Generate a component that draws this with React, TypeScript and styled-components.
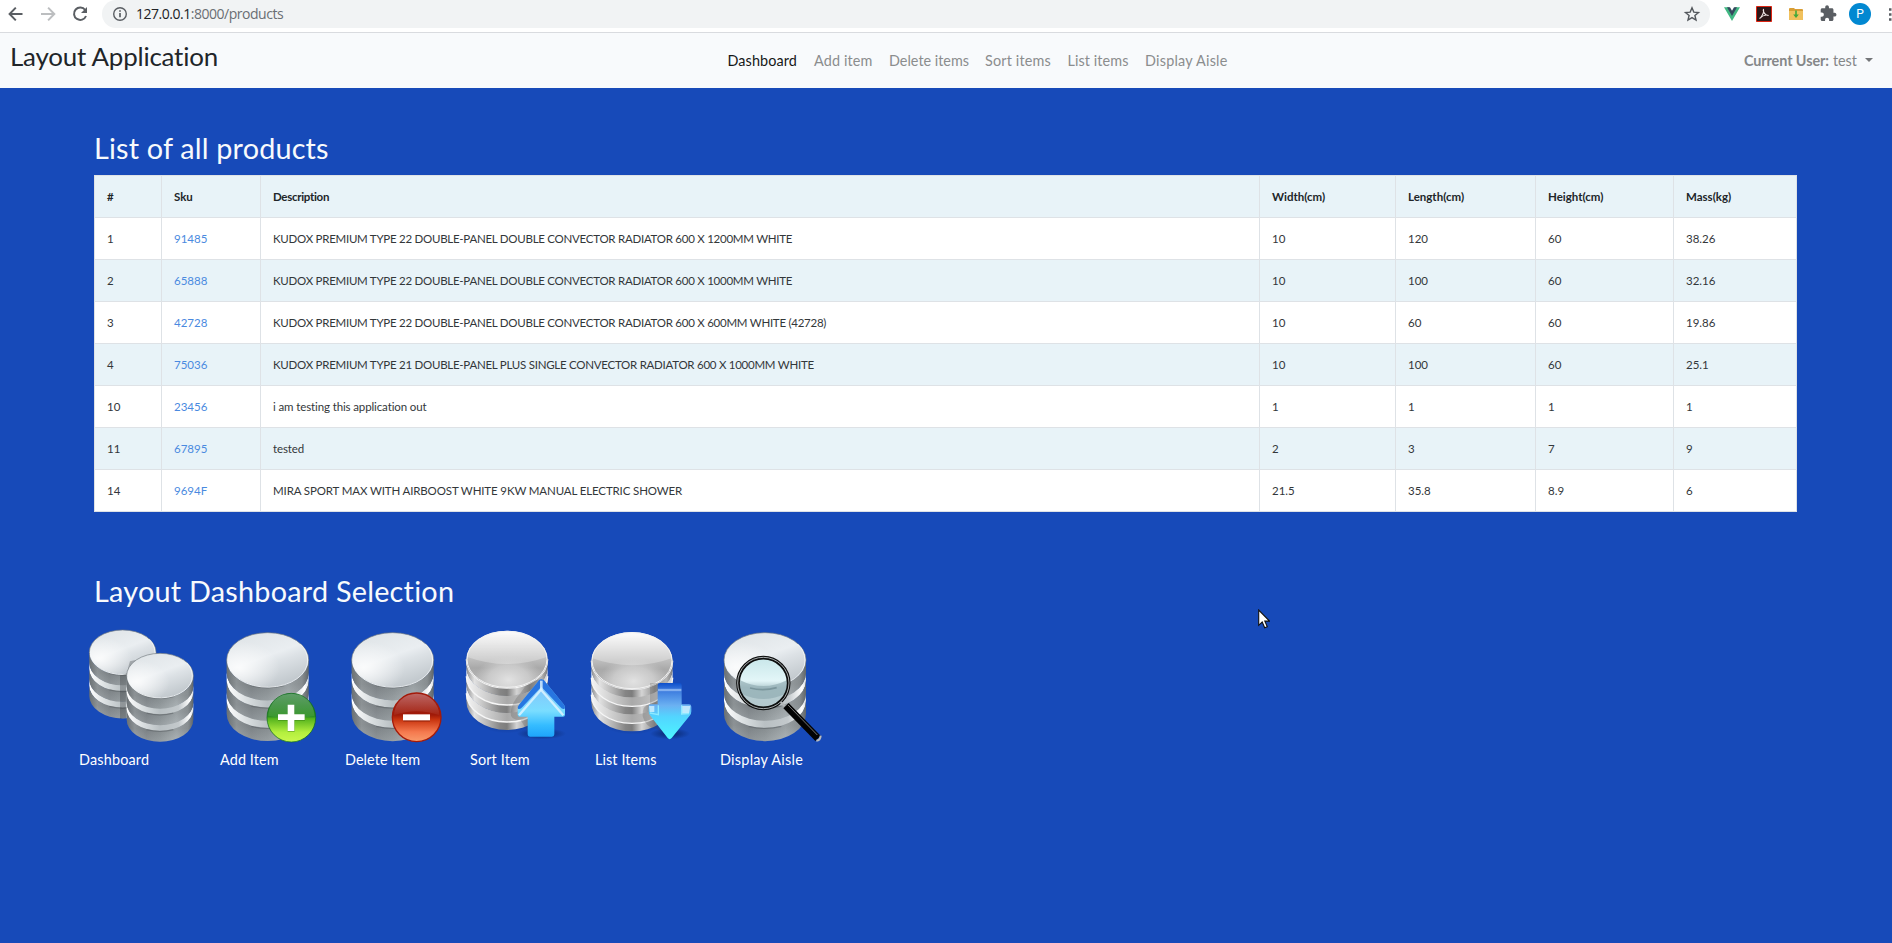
import React from "react";
import styled, { createGlobalStyle } from "styled-components";

const GlobalStyle = createGlobalStyle`
  * { box-sizing: border-box; }
  body {
    margin: 0;
    background: #174ab9;
    font-family: Lato, "Open Sans", sans-serif;
    font-size: 14.4px;
    font-weight: 400;
    line-height: 1.6;
    color: #212529;
    overflow: hidden;
    font-variant-ligatures: none;
  }
`;

const Page = styled.div`
  display: flex;
  flex-direction: column;
  height: 943px;
  overflow: hidden;
`;

/* ---------- browser toolbar ---------- */

const BrowserBar = styled.div`
  display: flex;
  align-items: flex-start;
  height: 33px;
  background: #fff;
  border-bottom: 1px solid #d9dbdf;
`;

const BrowserButtons = styled.div`
  display: flex;
  gap: 8px;
  width: 102px;
  padding: 2px 0 0 4px;
  flex: none;
`;

const ToolIcon = styled.svg`
  display: block;
  width: 24px;
  height: 24px;
  flex: none;
`;

const AddressBar = styled.div`
  display: flex;
  align-items: center;
  flex: 1;
  height: 28px;
  padding: 0 6px;
  border-radius: 14px;
  background: #f1f3f4;
`;

const Url = styled.div`
  flex: 1;
  padding-left: 4px;
  font-family: "Open Sans", "Noto Sans", sans-serif;
  font-size: 14px;
  letter-spacing: -0.48px;
  line-height: 26px;
  white-space: nowrap;
  color: #6a6e73;
`;

const UrlHost = styled.span`
  color: #202124;
`;

const Extensions = styled.div`
  display: flex;
  align-items: center;
  gap: 8px;
  width: 182px;
  height: 28px;
  padding-left: 10px;
  overflow: hidden;
  flex: none;
`;

const Avatar = styled.div`
  display: flex;
  align-items: center;
  justify-content: center;
  width: 22px;
  height: 22px;
  margin: 0 4px 0 1px;
  border-radius: 50%;
  background: #0288d1;
  color: #fff;
  font: 400 12px Roboto, sans-serif;
  flex: none;
`;

/* ---------- application navbar ---------- */

const Navbar = styled.nav`
  display: grid;
  grid-template-columns: 719.5px 1fr auto;
  height: 55px;
  padding: 0 19px 0 0;
  background: #f8fafc;
`;

const Brand = styled.div`
  padding-left: 10px;
  font-size: 25.9px;
  letter-spacing: -0.2px;
  line-height: 47px;
`;

const NavList = styled.div`
  display: flex;
`;

const NavItem = styled.a<{ $active?: boolean; $width: number; $track?: number }>`
  width: ${(p) => p.$width}px;
  padding-left: 8px;
  letter-spacing: ${(p) => p.$track ?? 0}px;
  line-height: 55px;
  white-space: nowrap;
  color: ${(p) => (p.$active ? "#161718" : "#8b8d8e")};
`;

const UserMenu = styled.div`
  display: flex;
  align-items: center;
  color: #858789;
`;

const UserLabel = styled.span`
  width: 89px;
  font-weight: 700;
  letter-spacing: -0.08px;
`;

const Caret = styled.span`
  margin: -2px 0 0 8px;
  border: 4.5px solid transparent;
  border-top-color: #747679;
  border-bottom: 0;
`;

/* ---------- content ---------- */

const Content = styled.main`
  flex: 1;
  padding: 43px 95px 0 94px;
`;

const Heading = styled.h2<{ $top?: number; $track: number }>`
  margin: ${(p) => p.$top ?? 0}px 0 9px;
  font-size: 28.8px;
  font-weight: 400;
  line-height: 35px;
  letter-spacing: ${(p) => p.$track}px;
  color: #f8fafc;
`;

const ProductTable = styled.table`
  width: 1703px;
  table-layout: fixed;
  border-collapse: collapse;
  background: #fff;
  font-size: 11.5px;
`;

const Row = styled.tr<{ $tinted?: boolean }>`
  height: 42px;
  background: ${(p) => (p.$tinted ? "#e8f3f8" : "#ffffff")};
`;

const HeadCell = styled.th<{ $track: number }>`
  padding: 1px 12px 0;
  border: 1px solid #dee2e6;
  font-weight: 700;
  letter-spacing: ${(p) => p.$track}px;
  text-align: left;
`;

const Cell = styled.td<{ $track?: number }>`
  padding: 1px 12px 0;
  border: 1px solid #dee2e6;
  letter-spacing: ${(p) => p.$track ?? 0}px;
  white-space: nowrap;
  color: #33373a;
`;

const SkuLink = styled.a`
  color: #4a8ae0;
`;

const Tiles = styled.div`
  display: flex;
  height: 160px;
  margin: 3px 0 0 -15px;
`;

const Tile = styled.a<{ $width: number }>`
  width: ${(p) => p.$width}px;
  flex: none;
`;

const TileArt = styled.svg`
  display: block;
  width: 125px;
  height: 128px;
  overflow: visible;
`;

const TileLabel = styled.div<{ $track: number }>`
  padding-top: 2px;
  line-height: 24px;
  letter-spacing: ${(p) => p.$track}px;
  white-space: nowrap;
  color: #fff;
`;

const Pointer = styled.svg`
  position: absolute;
  left: 1258px;
  top: 609px;
  width: 12px;
  height: 20px;
`;

const SharedDefs = styled.svg`
  position: absolute;
`;

/* ---------- drawings ---------- */

const Defs = () => (
  <SharedDefs width="0" height="0">
    <defs>
      <linearGradient id="side" x1="0" x2="1">
        <stop offset="0" stopColor="#73797c" />
        <stop offset=".12" stopColor="#9ba1a4" />
        <stop offset=".3" stopColor="#858b8f" />
        <stop offset=".5" stopColor="#8f9699" />
        <stop offset=".75" stopColor="#a9b0b3" />
        <stop offset=".92" stopColor="#969c9f" />
        <stop offset="1" stopColor="#676d70" />
      </linearGradient>
      <linearGradient id="sideShade" x1="0" x2="0" y1="0" y2="1">
        <stop offset=".6" stopColor="#3d4245" stopOpacity=".35" />
        <stop offset="1" stopColor="#c5cccf" stopOpacity=".35" />
      </linearGradient>
      <linearGradient id="lip" x1="0" x2="1">
        <stop offset="0" stopColor="#ffffff" />
        <stop offset=".25" stopColor="#d9dee0" />
        <stop offset=".5" stopColor="#b9c0c3" />
        <stop offset=".78" stopColor="#c3c9cc" />
        <stop offset=".95" stopColor="#ffffff" />
        <stop offset="1" stopColor="#d8dcde" />
      </linearGradient>
      <linearGradient id="lid" x1=".2" y1="0" x2=".75" y2="1">
        <stop offset="0" stopColor="#dfe4e7" />
        <stop offset=".45" stopColor="#eaeef1" />
        <stop offset=".58" stopColor="#dde2e6" />
        <stop offset="1" stopColor="#bcc3c8" />
      </linearGradient>
      <radialGradient id="lidGlow" cx=".15" cy=".65" r=".5">
        <stop offset="0" stopColor="#fff" stopOpacity=".8" />
        <stop offset="1" stopColor="#fff" stopOpacity="0" />
      </radialGradient>
      <linearGradient id="chromeSide" x1="0" x2="1">
        <stop offset="0" stopColor="#8f8f8f" />
        <stop offset=".1" stopColor="#e2e2e2" />
        <stop offset=".28" stopColor="#b0b0b0" />
        <stop offset=".42" stopColor="#858585" />
        <stop offset=".5" stopColor="#7d7d7d" />
        <stop offset=".62" stopColor="#d4d4d4" />
        <stop offset=".78" stopColor="#8f8f8f" />
        <stop offset=".92" stopColor="#b5b5b5" />
        <stop offset="1" stopColor="#7d7d7d" />
      </linearGradient>
      <linearGradient id="chromeLip" x1="0" x2="1">
        <stop offset="0" stopColor="#f4f4f4" />
        <stop offset=".25" stopColor="#cfcfcf" />
        <stop offset=".5" stopColor="#a9a9a9" />
        <stop offset="1" stopColor="#d8d8d8" />
      </linearGradient>
      <linearGradient id="chromeLid" x1="0" x2="0" y1="0" y2="1">
        <stop offset="0" stopColor="#fdfdfd" />
        <stop offset=".45" stopColor="#c4c4c4" />
        <stop offset=".65" stopColor="#a9a9a9" />
        <stop offset="1" stopColor="#bdbdbd" />
      </linearGradient>
      <radialGradient id="chromeGlow" cx=".52" cy=".86" r=".42">
        <stop offset="0" stopColor="#e2e2e2" />
        <stop offset=".6" stopColor="#d0d0d0" stopOpacity=".8" />
        <stop offset="1" stopColor="#c8c8c8" stopOpacity="0" />
      </radialGradient>
      <linearGradient id="green" x1="0" x2="0" y1="0" y2="1">
        <stop offset="0" stopColor="#0d6b1c" />
        <stop offset=".48" stopColor="#2f9222" />
        <stop offset=".52" stopColor="#55b31e" />
        <stop offset=".8" stopColor="#b3ef3e" />
        <stop offset="1" stopColor="#c9f84d" />
      </linearGradient>
      <linearGradient id="red" x1="0" x2="0" y1="0" y2="1">
        <stop offset="0" stopColor="#9a1814" />
        <stop offset=".45" stopColor="#a01a08" />
        <stop offset=".55" stopColor="#c93510" />
        <stop offset=".8" stopColor="#f5794e" />
        <stop offset="1" stopColor="#f99b6c" />
      </linearGradient>
      <linearGradient id="gloss" x1="0" x2="0" y1="0" y2="1">
        <stop offset="0" stopColor="#fff" stopOpacity=".34" />
        <stop offset="1" stopColor="#fff" stopOpacity=".04" />
      </linearGradient>
      <linearGradient id="up" x1="0" x2="0" y1="0" y2="1">
        <stop offset="0" stopColor="#86bdf8" />
        <stop offset=".55" stopColor="#7addff" />
        <stop offset=".8" stopColor="#35bcff" />
        <stop offset="1" stopColor="#1ea4fb" />
      </linearGradient>
      <linearGradient id="down" x1="0" x2="0" y1="0" y2="1">
        <stop offset="0" stopColor="#0d4fcb" />
        <stop offset=".12" stopColor="#3a78dd" />
        <stop offset=".4" stopColor="#6bb1f2" />
        <stop offset=".6" stopColor="#52d5ff" />
        <stop offset="1" stopColor="#4cf6ff" />
      </linearGradient>
      <linearGradient id="lens" x1="0" x2="0" y1="0" y2="1">
        <stop offset="0" stopColor="#c9e7ea" />
        <stop offset=".45" stopColor="#e3f6f8" />
        <stop offset=".58" stopColor="#b7cfd4" />
        <stop offset="1" stopColor="#b4c8cc" />
      </linearGradient>
      <radialGradient id="shadow">
        <stop offset="0" stopColor="#03194e" stopOpacity=".75" />
        <stop offset="1" stopColor="#03194e" stopOpacity="0" />
      </radialGradient>
    </defs>
  </SharedDefs>
);

const band = (cx: number, y: number, rx: number, ry: number, h: number) =>
  `M${cx - rx} ${y}v${h}a${rx} ${ry} 0 0 0 ${2 * rx} 0v${-h}a${rx} ${ry} 0 0 1 ${-2 * rx} 0z`;

const SilverDisks = ({ cx, cy, rx = 123, ry = 82 }: { cx: number; cy: number; rx?: number; ry?: number }) => {
  const step = rx * 0.496;
  const h = rx * 0.32;
  return (
    <g>
      {[2, 1, 0].map((i) => {
        const y = cy + i * step;
        return (
          <g key={i}>
            {i > 0 && (
              <path d={band(cx, y - step + h - 2, rx, ry, step - h + 4)} fill="url(#lip)" />
            )}
            <path d={band(cx, y, rx, ry, h)} fill="url(#side)" />
            <path d={band(cx, y, rx, ry, h)} fill="url(#sideShade)" opacity=".45" />
            <path
              d={`M${cx - rx * 0.4} ${y + ry * 0.94}Q${cx} ${y + ry * 1.09} ${cx + rx * 0.4} ${y + ry * 0.94}`}
              fill="none"
              stroke="#5b6164"
              strokeWidth="4"
              opacity=".55"
            />
          </g>
        );
      })}
      <ellipse cx={cx} cy={cy} rx={rx} ry={ry} fill="url(#lid)" stroke="#747c80" strokeWidth="2" />
      <ellipse cx={cx} cy={cy} rx={rx - 2} ry={ry - 2} fill="url(#lidGlow)" />
      <path
        d={`M${cx - rx + 3} ${cy + 5}A${rx - 3} ${ry - 3} 0 0 0 ${cx + rx - 3} ${cy}Q${cx + rx - 4} ${cy - ry * 0.35} ${cx + rx * 0.8} ${cy - ry * 0.58}`}
        fill="none"
        stroke="#f7f9fa"
        strokeWidth="3"
        opacity=".85"
      />
    </g>
  );
};

const ChromeDisks = ({ cx, cy }: { cx: number; cy: number }) => {
  const rx = 122;
  const ry = 86;
  const step = 51;
  const h = 24;
  return (
    <g>
      <ellipse cx={cx} cy={cy + 160} rx="110" ry="62" fill="url(#shadow)" />
      {[2, 1, 0].map((i) => {
        const y = cy + i * step;
        return (
          <g key={i}>
            {i > 0 && <path d={band(cx, y - step + h - 2, rx, ry, step - h + 3)} fill="url(#chromeLip)" />}
            <path d={band(cx, y, rx, ry, h)} fill="url(#chromeSide)" />
            <path d={`M${cx - rx} ${y}a${rx} ${ry} 0 0 0 ${2 * rx} 0`} fill="none" stroke="#f6f6f6" strokeWidth="4" />
          </g>
        );
      })}
      <ellipse cx={cx} cy={cy} rx={rx} ry={ry} fill="url(#chromeLid)" />
      <ellipse cx={cx} cy={cy} rx={rx} ry={ry} fill="url(#chromeGlow)" />
      <path
        d={`M${cx - rx + 1} ${cy - 8}Q${cx} ${cy + 36} ${cx + rx - 1} ${cy - 8}A${rx} ${ry} 0 0 0 ${cx - rx + 1} ${cy - 8}z`}
        fill="#fff"
        opacity=".28"
      />
      <ellipse cx={cx} cy={cy} rx={rx - 2} ry={ry - 2} fill="none" stroke="#f2f2f2" strokeWidth="3" />
    </g>
  );
};

const DashboardArt = () => (
  <TileArt viewBox="27 0 375 384">
    <SilverDisks cx={158} cy={103} rx={100} ry={67} />
    <path d="M150 172Q190 165 200 125L180 130Q165 170 168 300L150 303z" fill="#25292b" opacity=".28" />
    <SilverDisks cx={270} cy={173} rx={100} ry={67} />
  </TileArt>
);

const AddArt = () => (
  <TileArt viewBox="450 0 375 384">
    <SilverDisks cx={593} cy={126} />
    <circle cx="664" cy="299" r="73" fill="url(#green)" stroke="#11701d" strokeOpacity=".75" strokeWidth="3" />
    <path d="M595 293a69 66 0 0 1 138 0q-69 18-138 0z" fill="url(#gloss)" />
    <path d="M653 262h21v27h31v19h-31v33h-21v-33h-29v-19h29z" fill="#2d7012" opacity=".5" />
    <path d="M653 260h20v29h31v17h-31v33h-20v-33h-29v-17h29z" fill="#fff" />
  </TileArt>
);

const DeleteArt = () => (
  <TileArt viewBox="45 0 375 384">
    <SilverDisks cx={188} cy={126} />
    <circle cx="260" cy="298" r="73" fill="url(#red)" stroke="#a41a09" strokeWidth="4" />
    <path d="M192 292a68 65 0 0 1 136 0q-68-24-136 0z" fill="url(#gloss)" />
    <path d="M220 291h80v20h-80z" fill="#7a1605" opacity=".55" />
    <path d="M219 289h81v18h-81z" fill="#fff" />
  </TileArt>
);

const SortArt = () => (
  <TileArt viewBox="420 0 375 384">
    <ChromeDisks cx={531} cy={124} />
    <path d="M634 184q-42 4-62 40-28 30-30 60-2 22 30 22l20 34h46z" fill="#444" opacity=".22" />
    <ellipse cx="634" cy="347" rx="74" ry="17" fill="url(#shadow)" />
    <path
      d="M634 184q8 0 14 10l54 66q4 6 3 14v16q0 6-6 6h-26v53q0 7-7 7h-66q-7 0-7-7v-53h-24q-6 0-6-6v-16q0-8 4-14l54-66q6-10 13-10z"
      fill="url(#up)"
    />
    <path d="M634 184q8 0 14 10l54 66q4 6 2 12-6 4-14-6l-56-60-56 60q-8 10-14 6-2-6 3-12l54-66q6-10 13-10z" fill="#1766dc" opacity=".85" />
    <path d="M567 292l66-77 67 77" fill="none" stroke="#d7f2ff" strokeWidth="7" opacity=".9" />
    <path d="M634 188v30" stroke="#dff4ff" strokeWidth="8" opacity=".8" />
  </TileArt>
);

const ListArt = () => (
  <TileArt viewBox="45 0 375 384">
    <ChromeDisks cx={156} cy={128} />
    <path d="M234 195h-24v64q-24 2-22 36 8 34 40 38l40 20z" fill="#444" opacity=".22" />
    <ellipse cx="270" cy="347" rx="60" ry="17" fill="url(#shadow)" />
    <path
      d="M240 195h58q7 0 7 7v57h22q7 0 7 7v14q0 8-5 13l-54 67q-6 7-12 0l-52-67q-5-5-5-13v-14q0-7 7-7h20v-57q0-7 7-7z"
      fill="url(#down)"
    />
    <path d="M234 216h70" stroke="#9cc2f5" strokeWidth="7" opacity=".75" />
    <path d="M207 264h16v18h-14zM306 264h25l-4 23h-21z" fill="#e5faff" opacity=".7" />
    <path d="M210 285l25 5v-28M305 262v26l22-1" fill="none" stroke="#8deaff" strokeWidth="4" />
  </TileArt>
);

const DisplayArt = () => (
  <TileArt viewBox="420 0 375 384">
    <SilverDisks cx={555} cy={126} />
    <circle cx="550" cy="196" r="74" fill="url(#lens)" />
    <path d="M479 186Q550 222 622 186Q624 208 615 228Q550 258 485 228Q476 208 479 186z" fill="#8faab1" opacity=".65" />
    <path d="M510 210q40 10 80-1" fill="none" stroke="#6c878e" strokeWidth="5" opacity=".7" />
    <circle cx="550" cy="195" r="76" fill="none" stroke="#0c0d0d" strokeWidth="11" />
    <circle cx="550" cy="195" r="77" fill="none" stroke="#c7cbcc" strokeWidth="2.5" />
    <path d="M602 252l12 12" stroke="#b4b8ba" strokeWidth="7" />
    <path d="M618 263l96 98" stroke="#030303" strokeWidth="22" />
    <path d="M624 261l88 90" stroke="#777" strokeWidth="3" />
    <path d="M709 368q12 0 13-15" fill="none" stroke="#b9bcbd" strokeWidth="6" />
  </TileArt>
);

/* ---------- data ---------- */

const navItems = [
  { text: "Dashboard", width: 86.5, track: 0.1, active: true },
  { text: "Add item", width: 75, track: 0.14 },
  { text: "Delete items", width: 96, track: 0 },
  { text: "Sort items", width: 82.5, track: 0.17 },
  { text: "List items", width: 77.5, track: 0.08 },
  { text: "Display Aisle", width: 99, track: 0.23 },
];

const columns = [
  { text: "#", width: 67, track: 0 },
  { text: "Sku", width: 99, track: -0.1 },
  { text: "Description", width: 999, track: -0.3 },
  { text: "Width(cm)", width: 136, track: 0 },
  { text: "Length(cm)", width: 140, track: 0 },
  { text: "Height(cm)", width: 138, track: 0 },
  { text: "Mass(kg)", width: 123, track: 0 },
];

const products = [
  { id: "1", sku: "91485", text: "KUDOX PREMIUM TYPE 22 DOUBLE-PANEL DOUBLE CONVECTOR RADIATOR 600 X 1200MM WHITE", track: -0.26, dims: ["10", "120", "60", "38.26"] },
  { id: "2", sku: "65888", text: "KUDOX PREMIUM TYPE 22 DOUBLE-PANEL DOUBLE CONVECTOR RADIATOR 600 X 1000MM WHITE", track: -0.26, dims: ["10", "100", "60", "32.16"] },
  { id: "3", sku: "42728", text: "KUDOX PREMIUM TYPE 22 DOUBLE-PANEL DOUBLE CONVECTOR RADIATOR 600 X 600MM WHITE (42728)", track: -0.26, dims: ["10", "60", "60", "19.86"] },
  { id: "4", sku: "75036", text: "KUDOX PREMIUM TYPE 21 DOUBLE-PANEL PLUS SINGLE CONVECTOR RADIATOR 600 X 1000MM WHITE", track: -0.26, dims: ["10", "100", "60", "25.1"] },
  { id: "10", sku: "23456", text: "i am testing this application out", track: -0.12, dims: ["1", "1", "1", "1"] },
  { id: "11", sku: "67895", text: "tested", track: -0.1, dims: ["2", "3", "7", "9"] },
  { id: "14", sku: "9694F", text: "MIRA SPORT MAX WITH AIRBOOST WHITE 9KW MANUAL ELECTRIC SHOWER", track: -0.13, dims: ["21.5", "35.8", "8.9", "6"] },
];

const tiles = [
  { text: "Dashboard", width: 141, track: 0.18, Art: DashboardArt },
  { text: "Add Item", width: 125, track: 0.12, Art: AddArt },
  { text: "Delete Item", width: 125, track: 0.08, Art: DeleteArt },
  { text: "Sort Item", width: 125, track: 0.15, Art: SortArt },
  { text: "List Items", width: 125, track: 0.1, Art: ListArt },
  { text: "Display Aisle", width: 125, track: 0.27, Art: DisplayArt },
];

export default function App() {
  return (
    <Page>
      <GlobalStyle />
      <Defs />
      <BrowserBar>
        <BrowserButtons>
          <ToolIcon viewBox="0 0 24 24">
            <path d="M18.5 12H6.2M11.8 5.6L5.6 12l6.2 6.4" fill="none" stroke="#5a5e63" strokeWidth="2" />
          </ToolIcon>
          <ToolIcon viewBox="0 0 24 24">
            <path d="M5 12h12.7M12.1 5.6l6.2 6.4-6.2 6.4" fill="none" stroke="#bcbec0" strokeWidth="2" />
          </ToolIcon>
          <ToolIcon viewBox="0 0 24 24">
            <path d="M17.2 8A6.2 6.2 0 1 0 18 14" fill="none" stroke="#5a5e63" strokeWidth="2" />
            <path d="M19 5v6h-6z" fill="#5a5e63" />
          </ToolIcon>
        </BrowserButtons>
        <AddressBar>
          <ToolIcon viewBox="0 0 24 24">
            <circle cx="12" cy="12" r="6.3" fill="none" stroke="#5a5e63" strokeWidth="1.4" />
            <path d="M12 11v4.2M12 8.2v1.6" stroke="#5a5e63" strokeWidth="1.7" />
          </ToolIcon>
          <Url>
            <UrlHost>127.0.0.1</UrlHost>:8000/products
          </Url>
          <ToolIcon viewBox="0 0 24 24">
            <path
              d="M12 5.8l1.8 4.3 4.7.4-3.6 3 1.1 4.6-4-2.5-4 2.5 1.1-4.6-3.6-3 4.7-.4z"
              fill="none"
              stroke="#53575c"
              strokeWidth="1.4"
            />
          </ToolIcon>
        </AddressBar>
        <Extensions>
          <ToolIcon viewBox="0 0 24 24">
            <path d="M4 5.2h5L12 10.6l3-5.4h5L12 19z" fill="#41b883" />
            <path d="M7 5.2h3L12 8.8l2-3.6h3L12 14z" fill="#35495e" />
          </ToolIcon>
          <ToolIcon viewBox="0 0 24 24">
            <path d="M4.5 4.5h15v15h-15z" fill="#2d1718" stroke="#dc2412" />
            <path
              d="M7.5 16.5C9.5 15.5 12.5 10 11.5 7.5C10.5 8 12.5 14 16.5 13.5C14 12.5 10 14 7.5 16.5z"
              fill="none"
              stroke="#efe4e4"
              strokeWidth="1.1"
            />
          </ToolIcon>
          <ToolIcon viewBox="0 0 24 24">
            <path d="M5 7q0-1 1-1h4l1 1h7q1 0 1 1v9q0 1-1 1H6q-1 0-1-1z" fill="#d99e35" />
            <path d="M5 9h14v8q0 1-1 1H6q-1 0-1-1z" fill="#f1c15d" />
            <path d="M11.2 8.500h1.600v4h2L12 16 9.200 12.500h2z" fill="#42a83a" />
          </ToolIcon>
          <ToolIcon viewBox="0 0 24 24">
            <path
              transform="translate(3.2 2.5) scale(.75)"
              d="M20.5 11H19V7c0-1.1-.9-2-2-2h-4V3.5C13 2.12 11.88 1 10.5 1S8 2.12 8 3.5V5H4c-1.1 0-1.99.9-1.99 2v3.8H3.5c1.49 0 2.7 1.21 2.7 2.7s-1.21 2.7-2.7 2.7H2V20c0 1.1.9 2 2 2h3.8v-1.5c0-1.49 1.21-2.7 2.7-2.7 1.49 0 2.7 1.21 2.7 2.7V22H17c1.1 0 2-.9 2-2v-4h1.5c1.38 0 2.5-1.12 2.5-2.5S21.88 11 20.5 11z"
              fill="#5a5e63"
            />
          </ToolIcon>
          <Avatar>P</Avatar>
          <ToolIcon viewBox="0 0 24 24">
            <path d="M6 7.500h2.500M6 12.500h2.500M6 17.500h2.500" stroke="#5a5e63" strokeWidth="2.5" />
          </ToolIcon>
        </Extensions>
      </BrowserBar>

      <Navbar>
        <Brand>Layout Application</Brand>
        <NavList>
          {navItems.map((n) => (
            <NavItem key={n.text} $active={n.active} $width={n.width} $track={n.track}>
              {n.text}
            </NavItem>
          ))}
        </NavList>
        <UserMenu>
          <UserLabel>Current User:</UserLabel>
          test
          <Caret />
        </UserMenu>
      </Navbar>

      <Content>
        <Heading $track={0.18}>List of all products</Heading>
        <ProductTable>
          <colgroup>
            {columns.map((c) => (
              <col key={c.text} width={c.width} />
            ))}
          </colgroup>
          <thead>
            <Row $tinted>
              {columns.map((c) => (
                <HeadCell key={c.text} $track={c.track}>
                  {c.text}
                </HeadCell>
              ))}
            </Row>
          </thead>
          <tbody>
            {products.map((p, i) => (
              <Row key={p.id} $tinted={i % 2 === 1}>
                <Cell>{p.id}</Cell>
                <Cell>
                  <SkuLink>{p.sku}</SkuLink>
                </Cell>
                <Cell $track={p.track}>{p.text}</Cell>
                {p.dims.map((d, k) => (
                  <Cell key={k}>{d}</Cell>
                ))}
              </Row>
            ))}
          </tbody>
        </ProductTable>

        <Heading $top={62} $track={0.24}>
          Layout Dashboard Selection
        </Heading>
        <Tiles>
          {tiles.map(({ text, width, track, Art }) => (
            <Tile key={text} $width={width}>
              <Art />
              <TileLabel $track={track}>{text}</TileLabel>
            </Tile>
          ))}
        </Tiles>
      </Content>

      <Pointer viewBox="0 0 12 20">
        <path d="M.7 1v15.300l3.500-3.300 2.500 5.800 2.600-1.100-2.500-5.600h4.700z" fill="#fff" stroke="#101010" strokeWidth="1.1" />
      </Pointer>
    </Page>
  );
}
